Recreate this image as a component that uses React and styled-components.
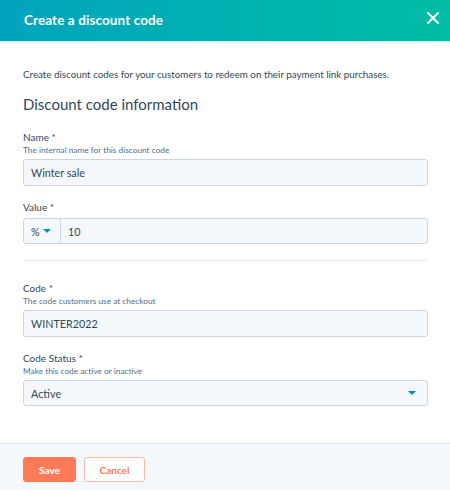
import React from 'react';
import styled, { createGlobalStyle } from 'styled-components';

const GlobalStyle = createGlobalStyle`
  html, body {
    margin: 0;
    padding: 0;
    background: #ffffff;
  }
  body {
    font-family: Lato, "Open Sans", sans-serif;
    color: #33475b;
  }
`;

const Modal = styled.div`
  width: 450px;
  height: 490px;
  display: flex;
  flex-direction: column;
  background: #ffffff;
  overflow: hidden;
`;

const Header = styled.div`
  height: 41px;
  flex-shrink: 0;
  display: flex;
  align-items: center;
  justify-content: space-between;
  padding: 0 5px 0 24px;
  background: linear-gradient(90deg, #00a4bd 0%, #00bda5 100%);
  color: #ffffff;
`;

const Title = styled.h1`
  margin: 0 0 2px;
  font-size: 13.5px;
  font-weight: 700;
  letter-spacing: 0.1px;
`;

const CloseButton = styled.button`
  width: 24px;
  height: 24px;
  display: flex;
  align-items: center;
  justify-content: center;
  margin-bottom: 6px;
  padding: 0;
  border: none;
  background: transparent;
  cursor: pointer;
`;

const Body = styled.div`
  flex: 1;
  padding: 25px 22px 0 23px;
`;

const Intro = styled.p`
  margin: 0;
  font-size: 9.8px;
  line-height: 16px;
`;

const SectionTitle = styled.h2`
  margin: 11px 0 15px;
  font-size: 15px;
  line-height: 22px;
  font-weight: 400;
`;

const Field = styled.div`
  margin-top: ${(p) => p.$top || 0}px;
`;

const Label = styled.div`
  font-size: 10px;
  line-height: 14px;
  margin-bottom: ${(p) => (p.$hint ? 0 : 4)}px;
`;

const Hint = styled.div`
  font-size: 8.3px;
  line-height: 12px;
  color: #516f90;
  margin-bottom: 3px;
`;

const InputBox = styled.div`
  height: ${(p) => p.$h || 27}px;
  box-sizing: border-box;
  display: flex;
  align-items: center;
  background: #f5f8fa;
  border: 1px solid #cbd6e2;
  border-radius: 3px;
  font-size: 10.8px;
  color: #33475b;
`;

const InputText = styled.span`
  flex: 1;
  padding: 0 7px;
`;

const Prefix = styled.div`
  width: 37px;
  height: 100%;
  box-sizing: border-box;
  display: flex;
  align-items: center;
  gap: 3px;
  padding-left: 7px;
  border-right: 1px solid #cbd6e2;
`;

const Caret = styled.span`
  width: 0;
  height: 0;
  border-left: 4px solid transparent;
  border-right: 4px solid transparent;
  border-top: 4px solid #0091ae;
  margin-right: ${(p) => p.$right || 0}px;
`;

const Divider = styled.hr`
  margin: 16px 0 20px;
  border: none;
  height: 1px;
  background: #eaf0f6;
`;

const Footer = styled.div`
  height: 47px;
  flex-shrink: 0;
  box-sizing: border-box;
  border-top: 1px solid #dfe3eb;
  background: #f5f8fa;
  display: flex;
  align-items: flex-start;
  gap: 8px;
  padding: 13px 23px 0;
`;

const Button = styled.button`
  height: 25px;
  box-sizing: border-box;
  padding: 0;
  width: ${(p) => p.$w}px;
  border-radius: 3px;
  font-family: Lato, "Open Sans", sans-serif;
  font-size: 10px;
  font-weight: 700;
  border: 1px solid ${(p) => (p.$primary ? '#ff7a59' : '#ffb8a5')};
  background: ${(p) => (p.$primary ? '#ff7a59' : '#ffffff')};
  color: ${(p) => (p.$primary ? '#ffffff' : '#ff7a59')};
  cursor: pointer;
`;

export default function App() {
  return (
    <>
      <GlobalStyle />
      <Modal>
        <Header>
          <Title>Create a discount code</Title>
          <CloseButton aria-label="Close">
            <svg width="12" height="12" viewBox="0 0 12 12">
              <path d="M1 1 L11 11 M11 1 L1 11" stroke="#fff" strokeWidth="2" strokeLinecap="square" />
            </svg>
          </CloseButton>
        </Header>
        <Body>
          <Intro>Create discount codes for your customers to redeem on their payment link purchases.</Intro>
          <SectionTitle>Discount code information</SectionTitle>

          <Field>
            <Label $hint>Name *</Label>
            <Hint>The internal name for this discount code</Hint>
            <InputBox>
              <InputText>Winter sale</InputText>
            </InputBox>
          </Field>

          <Field $top={14}>
            <Label>Value *</Label>
            <InputBox $h={26}>
              <Prefix>
                %<Caret />
              </Prefix>
              <InputText>10</InputText>
            </InputBox>
          </Field>

          <Divider />

          <Field>
            <Label $hint>Code *</Label>
            <Hint>The code customers use at checkout</Hint>
            <InputBox>
              <InputText>WINTER2022</InputText>
            </InputBox>
          </Field>

          <Field $top={14}>
            <Label $hint>Code Status *</Label>
            <Hint>Make this code active or inactive</Hint>
            <InputBox $h={26}>
              <InputText>Active</InputText>
              <Caret $right={11} />
            </InputBox>
          </Field>
        </Body>
        <Footer>
          <Button $primary $w={53}>Save</Button>
          <Button $w={61}>Cancel</Button>
        </Footer>
      </Modal>
    </>
  );
}
